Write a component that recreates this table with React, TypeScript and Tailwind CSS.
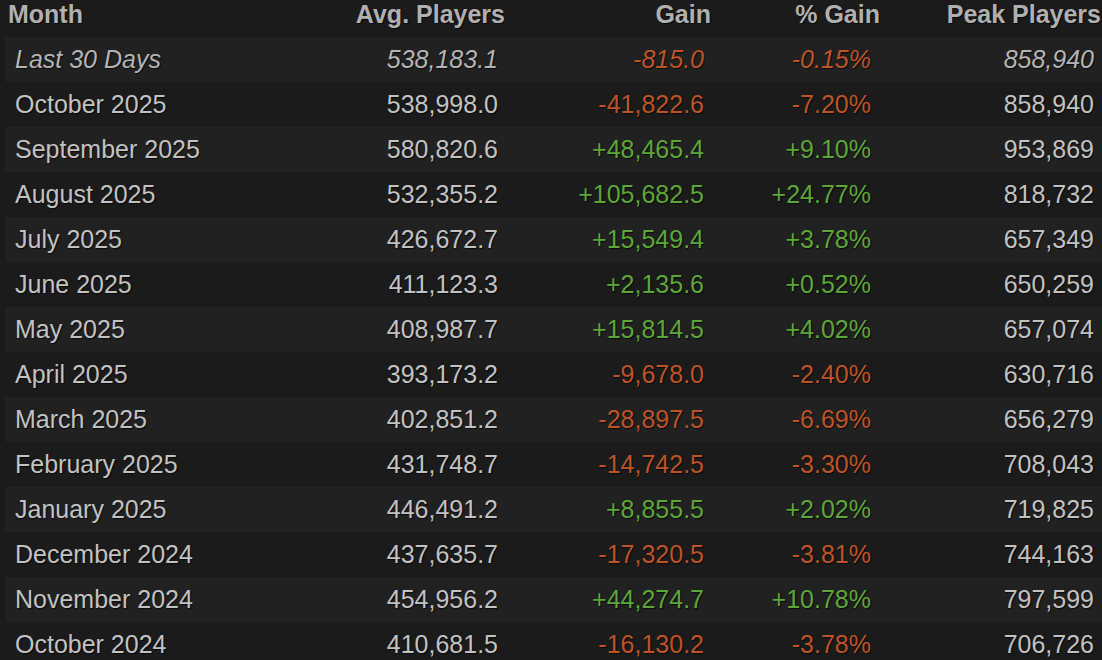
const rows: [string, string, string, string, string][] = [
  ["Last 30 Days", "538,183.1", "-815.0", "-0.15%", "858,940"],
  ["October 2025", "538,998.0", "-41,822.6", "-7.20%", "858,940"],
  ["September 2025", "580,820.6", "+48,465.4", "+9.10%", "953,869"],
  ["August 2025", "532,355.2", "+105,682.5", "+24.77%", "818,732"],
  ["July 2025", "426,672.7", "+15,549.4", "+3.78%", "657,349"],
  ["June 2025", "411,123.3", "+2,135.6", "+0.52%", "650,259"],
  ["May 2025", "408,987.7", "+15,814.5", "+4.02%", "657,074"],
  ["April 2025", "393,173.2", "-9,678.0", "-2.40%", "630,716"],
  ["March 2025", "402,851.2", "-28,897.5", "-6.69%", "656,279"],
  ["February 2025", "431,748.7", "-14,742.5", "-3.30%", "708,043"],
  ["January 2025", "446,491.2", "+8,855.5", "+2.02%", "719,825"],
  ["December 2024", "437,635.7", "-17,320.5", "-3.81%", "744,163"],
  ["November 2024", "454,956.2", "+44,274.7", "+10.78%", "797,599"],
  ["October 2024", "410,681.5", "-16,130.2", "-3.78%", "706,726"],
];

function gainColor(v: string) {
  return v.startsWith("+") ? "text-[#5ca63a]" : "text-[#bd5429]";
}

export default function App() {
  return (
    <div
      className="w-[1102px] h-[660px] overflow-hidden bg-[#1b1b1b] text-[25px] [text-shadow:1px_1px_1px_rgba(0,0,0,0.7)]"
      style={{ fontFamily: '"Liberation Sans", Arial, sans-serif' }}
    >
      <div className="w-[1109px]">
        <div className="grid grid-cols-[300px_213px_206px_169px_221px] h-[37px] font-bold text-[#b0b0b0] leading-[28px]">
          <div className="px-[8px]">Month</div>
          <div className="px-[8px] text-right">Avg. Players</div>
          <div className="px-[8px] text-right">Gain</div>
          <div className="px-[8px] text-right">% Gain</div>
          <div className="px-[8px] text-right">Peak Players</div>
        </div>
        {rows.map((r, i) => (
          <div
            key={r[0]}
            className={`ml-[5px] grid grid-cols-[295px_213px_206px_167px_223px] h-[45px] items-center leading-[45px] ${
              i % 2 === 0 ? "bg-[#212121]" : ""
            } ${i === 0 ? "italic text-[#b4b4b4]" : "text-[#c2c2c2]"}`}
          >
            <div className="pl-[10px] pr-[15px]">{r[0]}</div>
            <div className="px-[15px] text-right">{r[1]}</div>
            <div className={`px-[15px] text-right ${gainColor(r[2])}`}>{r[2]}</div>
            <div className={`px-[15px] text-right ${gainColor(r[3])}`}>{r[3]}</div>
            <div className="px-[15px] text-right">{r[4]}</div>
          </div>
        ))}
      </div>
    </div>
  );
}
